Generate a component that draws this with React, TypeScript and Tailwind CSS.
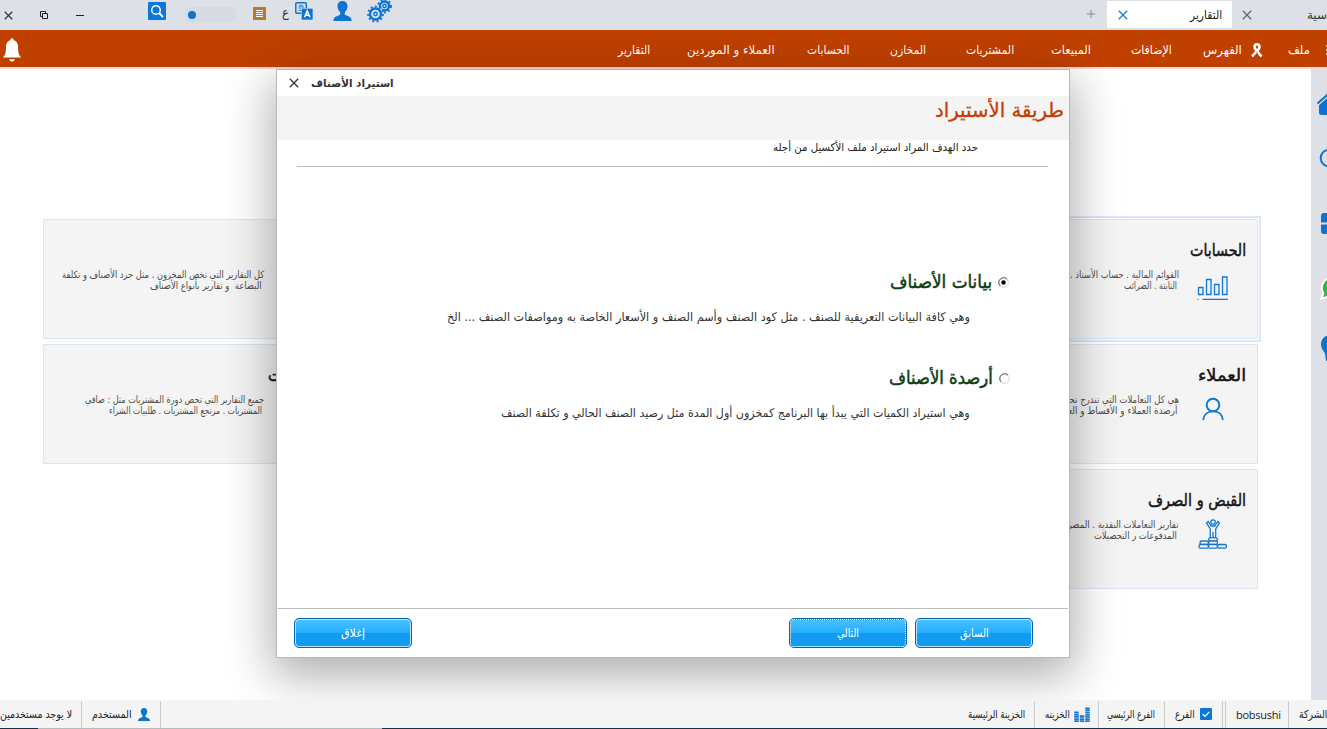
import { useLayoutEffect, useRef, useState } from "react";
import type { ReactNode } from "react";

/* One line of Arabic text, condensed to the width of its box and aligned right. */
function T({ className, children }: { className: string; children: ReactNode }) {
  const box = useRef<HTMLSpanElement>(null);
  const text = useRef<HTMLSpanElement>(null);
  const [scale, setScale] = useState(1);
  useLayoutEffect(() => {
    if (box.current && text.current) setScale(box.current.clientWidth / text.current.offsetWidth);
  }, []);
  return (
    <span ref={box} dir="rtl" className={`flex shrink-0 items-center ${className}`}>
      <span ref={text} className="block shrink-0 origin-right whitespace-pre" style={{ transform: `scaleX(${scale})` }}>
        {children}
      </span>
    </span>
  );
}

function Cross({ className }: { className: string }) {
  return (
    <svg viewBox="0 0 10 10" className={`shrink-0 ${className}`} fill="none" stroke="currentColor" strokeWidth="1.3">
      <path d="M.8.8l8.4 8.4M9.2.8L.8 9.2" />
    </svg>
  );
}

function UserShape({ className }: { className: string }) {
  return (
    <svg viewBox="0 0 19 20" className={`shrink-0 ${className}`} fill="#0b74d1">
      <path d="M9.500 0C6.300 0 4.500 2 4.500 5c0 2.600 1 4.700 2.700 6v2.800L2 16Q.5 17 .3 20h18.400q-.2-3-1.700-4l-5.200-2.200V11c1.700-1.300 2.700-3.400 2.700-6 0-3-1.800-5-5-5z" />
    </svg>
  );
}

function Gear({ cx, cy, r }: { cx: number; cy: number; r: number }) {
  return (
    <g stroke="#0b74d1" fill="none">
      <circle cx={cx} cy={cy} r={r} strokeWidth="2.400" />
      <circle cx={cx} cy={cy} r={r + 2} strokeWidth="1.800" strokeDasharray="2 2.300" />
      <circle cx={cx} cy={cy} r="1.700" strokeWidth="1.400" />
    </g>
  );
}

function TopBar() {
  return (
    <header className="flex h-[30px] shrink-0 items-start bg-[#dde0e6] text-[#333]">
      <Cross className="ml-[4px] mt-[11px] size-[9px]" />
      <svg className="ml-[27px] mt-[11px] size-[8px] shrink-0" viewBox="0 0 8 8" fill="none" stroke="#222">
        <path d="M2.500 2.500h5v5h-5zM.5 5.500v-5h5M.5 5.500h2M5.500.5v2" />
      </svg>
      <div className="ml-[28px] mt-[15px] h-px w-[8px] bg-[#222]" />
      <svg className="ml-[64px] mt-[2px] size-[18px] shrink-0" viewBox="0 0 18 18" fill="none">
        <rect width="18" height="18" rx="1" fill="#0b78d7" />
        <circle cx="8" cy="8" r="4.300" stroke="#fff" strokeWidth="1.500" />
        <path d="M11 11l4 4" stroke="#fff" strokeWidth="1.800" />
      </svg>
      <div className="ml-[19px] mt-[7px] flex h-[15px] w-[52px] shrink-0 items-center rounded-full bg-[#d6dae2] pl-[3px]">
        <div className="size-[8px] rounded-full bg-[#0b74d1]" />
      </div>
      <svg className="ml-[16px] mt-[7px] size-[13px] shrink-0" viewBox="0 0 13 13">
        <rect width="13" height="13" fill="#b97b22" />
        <path d="M3 3.500h7M3 5.500h7M3 7.500h7M3 9.500h7" stroke="#fff" />
      </svg>
      <T className="ml-[16px] mt-[3px] h-[18px] w-[7px] text-[13px]">ع</T>
      <svg className="ml-[6px] mt-[2px] h-[18px] w-[18px] shrink-0" viewBox="0 0 18 18" fill="none">
        <rect x=".8" y=".8" width="10.500" height="10.500" rx="1" stroke="#0b74d1" strokeWidth="1.500" />
        <path d="M3.500 4h5M8 4.500v4H3.500M3.500 6h3M6 2.500V4" stroke="#0b74d1" />
        <rect x="6.300" y="6.300" width="11.700" height="11.700" rx="1" fill="#0b74d1" stroke="#dde0e6" strokeWidth=".7" />
        <path d="M9.500 15.300l2.700-6.300 2.700 6.300M10.400 13.300h3.600" stroke="#fff" strokeWidth="1.500" />
      </svg>
      <UserShape className="ml-[20px] mt-[1px] h-[20px] w-[19px]" />
      <svg className="ml-[15px] h-[23px] w-[25px] shrink-0" viewBox="0 0 25 23">
        <Gear cx={17.5} cy={6} r={4.5} />
        <circle cx="8.500" cy="14" r="8" fill="#dde0e6" />
        <Gear cx={8.5} cy={14} r={5.5} />
      </svg>
      <svg className="ml-[695px] mt-[10px] size-[8px] shrink-0" viewBox="0 0 8 8" stroke="#888">
        <path d="M4 0v8M0 4h8" />
      </svg>
      <div className="ml-[12px] mt-px flex h-[27px] w-[125px] shrink-0 items-center bg-white text-[#222]">
        <Cross className="ml-[11px] size-[10px] text-[#187bcd]" />
        <T className="ml-[62px] h-[20px] w-[32px] text-[12px]">التقارير</T>
      </div>
      <Cross className="ml-[10px] mt-[10px] size-[10px] text-[#666]" />
      <T className="ml-[55px] mt-[5px] h-[20px] w-[20px] text-[12px]">سية</T>
    </header>
  );
}

function MenuBar() {
  return (
    <nav className="flex h-[39px] shrink-0 items-center border-b-2 border-[#f0d9cf] bg-[#c04000] text-[12px] text-white">
      <svg className="ml-[2px] mt-[2px] h-[24px] w-[20px] shrink-0" viewBox="0 0 20 24" fill="#fff">
        <circle cx="10" cy="2" r="1.700" />
        <path d="M10 2C6 2 4 5 4 9c0 6-1 8-3 10.500h18C17 17 16 15 16 9c0-4-2-7-6-7zM7 21.200h6q-1 2.200-3 2.200t-3-2.200z" />
      </svg>
      <T className="ml-[596px] mt-[3px] h-[20px] w-[32px]">التقارير</T>
      <T className="ml-[37px] mt-[3px] h-[20px] w-[88px]">العملاء و الموردين</T>
      <T className="ml-[32px] mt-[3px] h-[20px] w-[42px]">الحسابات</T>
      <T className="ml-[41px] mt-[3px] h-[20px] w-[36px]">المخازن</T>
      <T className="ml-[40px] mt-[3px] h-[20px] w-[48px]">المشتريات</T>
      <T className="ml-[37px] mt-[3px] h-[20px] w-[40px]">المبيعات</T>
      <T className="ml-[40px] mt-[3px] h-[20px] w-[41px]">الإضافات</T>
      <T className="ml-[31px] mt-[3px] h-[20px] w-[39px]">الفهرس</T>
      <svg className="ml-[9px] mt-[4px] h-[15px] w-[12px] shrink-0" viewBox="0 0 12 15" fill="none" stroke="#fff">
        <path d="M1 13.500L8 5.500Q9.500 1.500 6 1.300 2.500 1.500 4 5.500l6.500 8" strokeWidth="2.600" />
        <path d="M5.300 8.700l1.700 2" stroke="#c04000" strokeWidth=".7" />
      </svg>
      <T className="ml-[25px] mt-[3px] h-[20px] w-[22px]">ملف</T>
      <div className="ml-[16px] mt-[3px] flex shrink-0 flex-col gap-[2px]">
        <i className="size-[2px] bg-white/70" />
        <i className="size-[2px] bg-white/70" />
        <i className="size-[2px] bg-white/70" />
      </div>
    </nav>
  );
}

function Card({ children, active }: { children?: ReactNode; active?: boolean }) {
  return (
    <section className={`flex h-[120px] w-[300px] shrink-0 flex-col border border-[#dbe6f3] bg-[#f4f4f4] pt-[18px] ${active ? "outline-2 outline-offset-1 outline-[#dde8f7]" : ""}`}>
      {children}
    </section>
  );
}

function CardBody({ title, lines, icon }: { title: ReactNode; lines: ReactNode; icon?: ReactNode }) {
  return (
    <>
      <div className="flex h-[24px] justify-end pr-[11px] text-[17px] text-[#161616] [-webkit-text-stroke:0.5px_#161616]">{title}</div>
      <div className="flex justify-end">
        <div className="mt-[7px] flex flex-col items-end text-[10px] text-[#4c4c4c]">{lines}</div>
        <div className="flex h-[50px] w-[78px] shrink-0 items-start pl-[18px] pt-px">{icon}</div>
      </div>
    </>
  );
}

function ReportCards() {
  return (
    <main className="flex h-full flex-1 flex-col gap-[5px] pl-[43px] pr-[53px] pt-[150px]">
      <div className="flex justify-between">
        <Card>
          <CardBody
            title={<T className="w-[48px]">المخازن</T>}
            lines={
              <>
                <T className="h-[11px] w-[202px]">كل التقارير التي تخص المخزون . مثل جرد الأصناف و تكلفة</T>
                <T className="mr-[2px] h-[11px] w-[112px]">البضاعة  و تقارير بأنواع الأصناف</T>
              </>
            }
          />
        </Card>
        <Card active>
          <CardBody
            title={<T className="w-[56px]">الحسابات</T>}
            lines={
              <>
                <T className="h-[11px] w-[136px]">القوائم المالية . حساب الأستاذ . الأصول</T>
                <T className="mr-[2px] h-[11px] w-[53px]">الثابتة . الضرائب</T>
              </>
            }
            icon={
              <svg className="mt-[12px] h-[26px] w-[32px]" viewBox="0 0 32 26" fill="#e4f3ff" stroke="#1478ca" strokeWidth="1.300">
                <path d="M1.500 12.500h4.500v7H1.500zM9.500 4.500h4.500v15H9.500zM17.500 9.500h4.500v10h-4.500zM25.500 2h4.500v17.500h-4.500zM5.500 24.300H31M.5 24.300h1" />
              </svg>
            }
          />
        </Card>
      </div>
      <div className="flex justify-between">
        <Card>
          <CardBody
            title={<T className="w-[63px]">المشتريات</T>}
            lines={
              <>
                <T className="h-[11px] w-[179px]">جميع التقارير التي تخص دورة المشتريات مثل : صافي</T>
                <T className="mr-[2px] h-[11px] w-[153px]">المشتريات . مرتجع المشتريات . طلبيات الشراء</T>
              </>
            }
          />
        </Card>
        <Card>
          <CardBody
            title={<T className="w-[48px]">العملاء</T>}
            lines={
              <>
                <T className="h-[11px] w-[130px]">هي كل التعاملات التي تندرج تحت بند</T>
                <T className="mr-[2px] h-[11px] w-[132px]">أرصدة العملاء و الأقساط و العمولات</T>
              </>
            }
            icon={
              <svg className="ml-[5px] mt-[9px] h-[24px] w-[22px]" viewBox="0 0 22 24" fill="none" stroke="#1478ca" strokeWidth="1.900">
                <circle cx="11" cy="8" r="6.300" />
                <path d="M1.300 23C1.500 18 5 14.500 11 14.400s9.500 3.600 9.700 8.600" />
              </svg>
            }
          />
        </Card>
      </div>
      <div className="flex justify-end">
        <Card>
          <CardBody
            title={<T className="w-[98px]">القبض و الصرف</T>}
            lines={
              <>
                <T className="h-[11px] w-[130px]">تقارير التعاملات النقدية . المصروفات</T>
                <T className="mr-[2px] h-[11px] w-[83px]">المدفوعات ر التحصيلات</T>
              </>
            }
            icon={
              <svg className="ml-px mt-[5px] h-[32px] w-[30px]" viewBox="0 0 30 32" fill="none" stroke="#1478ca" strokeWidth="1.300">
                <circle cx="15" cy="4" r="2.200" />
                <path d="M12.300 20v-9L8.500 5l1.700-1.500 3 4.500h3.600l3-4.500L21.500 5l-3.800 6v9M15 14v7" />
                <g fill="#f4f4f4">
                  <ellipse cx="15" cy="21.500" rx="4.500" ry="1.800" />
                  <rect x="2" y="23" width="8.500" height="3.500" rx="1.700" />
                  <rect x="1" y="26.500" width="9.500" height="3.700" rx="1.800" />
                  <rect x="10.500" y="23" width="9" height="3.500" rx="1.700" />
                  <rect x="10.500" y="26.500" width="9" height="3.700" rx="1.800" />
                  <rect x="19.500" y="26.500" width="9" height="3.700" rx="1.800" />
                </g>
              </svg>
            }
          />
        </Card>
      </div>
    </main>
  );
}

function SideBar() {
  return (
    <aside className="flex w-[16px] shrink-0 flex-col overflow-hidden bg-[#dde0e6] pl-[5px]">
      <svg className="mt-[22px] h-[25px] w-[26px] shrink-0" viewBox="0 0 26 25" fill="#0b74d1">
        <path d="M3 14L14 4.500 24 13v9.500q0 1.500-1.500 1.500h-17Q3 24 3 22z" />
        <path d="M1.500 12.500L14 1.500l12 11" fill="none" stroke="#dde0e6" strokeWidth="4" />
        <path d="M1.500 12.500L14 1.500l12 11" fill="none" stroke="#0b74d1" strokeWidth="2.200" />
      </svg>
      <svg className="ml-[3px] mt-[32px] h-[20px] w-[20px] shrink-0" viewBox="0 0 20 20" fill="none">
        <circle cx="10" cy="10" r="8.300" stroke="#0b74d1" strokeWidth="2" />
      </svg>
      <svg className="ml-[5px] mt-[45px] h-[21px] w-[22px] shrink-0" viewBox="0 0 22 21" fill="#0b74d1">
        <path d="M3 0h8v9.500H0V3Q0 0 3 0zM0 11.500h11V21H3q-3 0-3-3z" />
      </svg>
      <svg className="ml-[4px] mt-[42px] h-[24px] w-[24px] shrink-0" viewBox="0 0 24 24" fill="#36b449" stroke="#fff" strokeWidth="2">
        <path d="M1.500 22.500l1.800-5.200a10.300 10.300 0 1 1 3.900 3.700z" />
      </svg>
      <svg className="ml-[5px] mt-[35px] h-[27px] w-[20px] shrink-0" viewBox="0 0 20 27" fill="#0b74d1">
        <path d="M10 0C4 0 0 4 0 9.500c0 4 2.500 6 4 9L5 26h10l1-7.500c1.500-3 4-5 4-9C20 4 16 0 10 0z" />
      </svg>
    </aside>
  );
}

function DialogButton({ children, focused }: { children: ReactNode; focused?: boolean }) {
  return (
    <button className="h-[30px] w-[118px] shrink-0 rounded-[5px] border border-[#0864a8] bg-[#149cf0] text-[12px] text-white">
      <span
        className={`flex h-full w-full items-center justify-center rounded-[4px] border bg-linear-to-b from-[#48c0ff] via-[#20aeff] via-50% to-[#139bef] to-52% ${focused ? "border-dotted border-white" : "border-[#b9e6ff]"}`}
      >
        {children}
      </span>
    </button>
  );
}

function Radio({ checked }: { checked?: boolean }) {
  return (
    <svg className="size-[11px] shrink-0" viewBox="0 0 11 11">
      <circle cx="5.500" cy="5.500" r="4.900" fill="#fff" stroke="#ccc" strokeWidth=".8" />
      <path d="M2.200 9A4.800 4.800 0 0 1 9 2.200" fill="none" stroke="#555" strokeWidth="1" />
      {checked && <circle cx="5.500" cy="5.500" r="2.200" fill="#000" />}
    </svg>
  );
}

function ImportDialog() {
  return (
    <div className="absolute left-[276px] top-[69px] flex h-[589px] w-[794px] flex-col border border-[#b5b9bc] bg-white shadow-[0_14px_44px_4px_rgba(0,0,0,0.32)]">
      <div className="flex h-[26px] shrink-0 items-center">
        <Cross className="ml-[12px] size-[10px] text-[#333]" />
        <T className="ml-[12px] h-[20px] w-[83px] text-[11px] font-bold text-[#333]">استيراد الأصناف</T>
      </div>
      <div className="flex h-[44px] shrink-0 items-start justify-end bg-[#f4f4f4] pr-[5px]">
        <T className="h-[27px] w-[129px] text-[20px] text-[#c04000] [-webkit-text-stroke:0.3px_#c04000]">طريقة الأستيراد</T>
      </div>
      <div className="ml-[20px] mr-[21px] flex h-[27px] shrink-0 items-start justify-end border-b border-[#bcbcbc] pr-[70px]">
        <T className="h-[14px] w-[205px] text-[11px] text-[#222]">حدد الهدف المراد استيراد ملف الأكسيل من أجله</T>
      </div>
      <div className="flex flex-1 flex-col items-end pr-[59px] pt-[100px] text-[#103c12]">
        <div className="flex h-[30px] items-center gap-[6px] pr-px">
          <T className="h-[28px] w-[102px] text-[18px] [-webkit-text-stroke:0.5px_#103c12]">بيانات الأصناف</T>
          <Radio checked />
        </div>
        <T className="mr-[40px] mt-[10px] h-[20px] w-[523px] text-[12px] text-[#333]">
          وهي كافة البيانات التعريفية للصنف . مثل كود الصنف وأسم الصنف و الأسعار الخاصة به ومواصفات الصنف ... الخ
        </T>
        <div className="mt-[36px] flex h-[30px] items-center gap-[6px]">
          <T className="h-[28px] w-[104px] text-[18px] [-webkit-text-stroke:0.5px_#103c12]">أرصدة الأصناف</T>
          <Radio />
        </div>
        <T className="mr-[40px] mt-[10px] h-[20px] w-[469px] text-[12px] text-[#333]">
          وهي استيراد الكميات التي يبدأ بها البرنامج كمخزون أول المدة مثل رصيد الصنف الحالي و تكلفة الصنف
        </T>
      </div>
      <footer className="mx-px flex h-[49px] shrink-0 items-start border-t border-[#bcbcbc] pl-[16px] pt-[9px]">
        <DialogButton>
          <T className="h-[20px] w-[24px]">إغلاق</T>
        </DialogButton>
        <div className="ml-[377px] flex gap-[8px]">
          <DialogButton focused>
            <T className="h-[20px] w-[22px]">التالي</T>
          </DialogButton>
          <DialogButton>
            <T className="h-[20px] w-[29px]">السابق</T>
          </DialogButton>
        </div>
      </footer>
    </div>
  );
}

function Divider({ className }: { className: string }) {
  return <div className={`h-[27px] w-px shrink-0 bg-[#ccc] ${className}`} />;
}

function StatusBar() {
  return (
    <footer className="flex h-[29px] shrink-0 flex-col">
      <div className="flex h-[28px] items-center bg-[#f3f3f3]/90 text-[11px] text-[#222]">
        <T className="h-[20px] w-[72px]">لا يوجد مستخدمين</T>
        <Divider className="ml-[9px]" />
        <T className="ml-[10px] h-[20px] w-[40px]">المستخدم</T>
        <UserShape className="ml-[5px] h-[13px] w-[14px]" />
        <Divider className="ml-[9px]" />
        <T className="ml-[807px] h-[20px] w-[57px]">الخزينة الرئيسية</T>
        <Divider className="ml-[9px]" />
        <T className="ml-[10px] h-[20px] w-[25px]">الخزينه</T>
        <svg className="ml-[4px] h-[15px] w-[16px] shrink-0" viewBox="0 0 16 15" stroke="#1478ca" fill="none" strokeWidth="4.500">
          <path d="M2.500 15V4M8 15V8M13.500 15V0" strokeDasharray="1.700 .4" />
        </svg>
        <Divider className="ml-[8px]" />
        <T className="ml-[8px] h-[20px] w-[48px]">الفرع الرئيسي</T>
        <Divider className="ml-[9px]" />
        <T className="ml-[10px] h-[20px] w-[20px]">الفرع</T>
        <svg className="ml-[5px] size-[12px] shrink-0" viewBox="0 0 12 12">
          <rect width="12" height="12" rx="1" fill="#0b78d7" />
          <path d="M2.700 6l2.300 2.400 4.300-4.600" stroke="#fff" strokeWidth="1.200" fill="none" />
        </svg>
        <Divider className="ml-[10px]" />
        <Divider className="ml-[2px]" />
        <span className="ml-[10px] w-[43px] shrink-0 font-['Open_Sans',sans-serif] text-[11px] tracking-[-0.25px]">bobsushi</span>
        <Divider className="ml-[9px]" />
        <T className="ml-[10px] h-[20px] w-[28px]">الشركة</T>
      </div>
      <div className="flex h-px">
        <div className="w-[38px] bg-[#16324a]" />
        <div className="w-[344px] bg-[#b5bcbc]" />
        <div className="flex-1 bg-[#16324a]" />
      </div>
    </footer>
  );
}

export default function App() {
  return (
    <div dir="ltr" className="relative flex h-[729px] w-[1327px] flex-col overflow-hidden bg-white font-['DejaVu_Sans',sans-serif] leading-none">
      <TopBar />
      <MenuBar />
      <div className="flex h-[631px] shrink-0">
        <ReportCards />
        <SideBar />
      </div>
      <ImportDialog />
      <div className="relative">
        <StatusBar />
      </div>
    </div>
  );
}
